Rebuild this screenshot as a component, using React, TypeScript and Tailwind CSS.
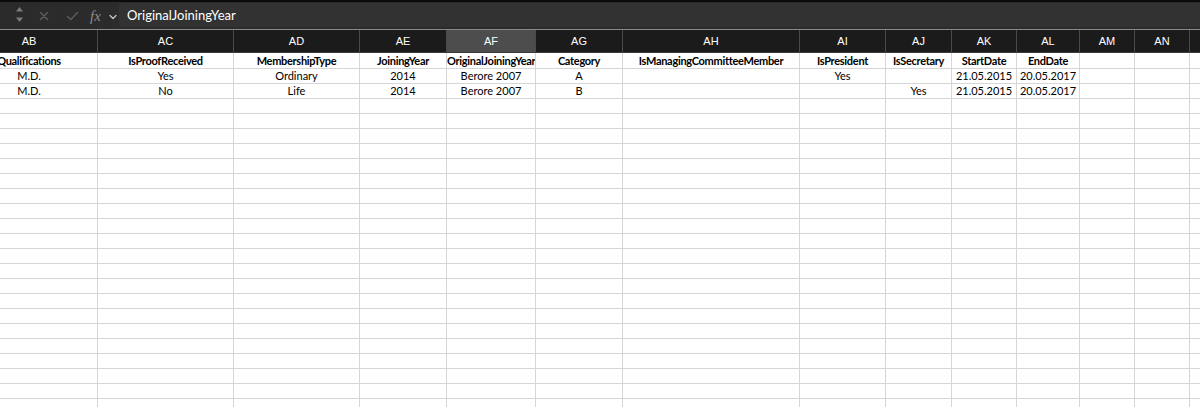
import React from 'react';

type Col = { key: string; w: string };

const columns: Col[] = [
  { key: 'AB', w: 'w-[137px]' },
  { key: 'AC', w: 'w-[136px]' },
  { key: 'AD', w: 'w-[126px]' },
  { key: 'AE', w: 'w-[87px]' },
  { key: 'AF', w: 'w-[89px]' },
  { key: 'AG', w: 'w-[87px]' },
  { key: 'AH', w: 'w-[177px]' },
  { key: 'AI', w: 'w-[86px]' },
  { key: 'AJ', w: 'w-[66px]' },
  { key: 'AK', w: 'w-[65px]' },
  { key: 'AL', w: 'w-[63px]' },
  { key: 'AM', w: 'w-[55px]' },
  { key: 'AN', w: 'w-[55px]' },
  { key: 'AO', w: 'w-[61px]' },
];

const rows: string[][] = [
  ['Qualifications', 'IsProofReceived', 'MembershipType', 'JoiningYear', 'OriginalJoiningYear', 'Category', 'IsManagingCommitteeMember', 'IsPresident', 'IsSecretary', 'StartDate', 'EndDate', '', '', ''],
  ['M.D.', 'Yes', 'Ordinary', '2014', 'Berore 2007', 'A', '', 'Yes', '', '21.05.2015', '20.05.2017', '', '', ''],
  ['M.D.', 'No', 'Life', '2014', 'Berore 2007', 'B', '', '', 'Yes', '21.05.2015', '20.05.2017', '', '', ''],
];

const TOTAL_ROWS = 25;

function Toolbar() {
  return (
    <div className="h-[29px] bg-[#2b2b2b] border-t-2 border-[#0b0b0b] flex items-stretch">
      {/* stepper + cancel/enter + fx */}
      <div className="w-[119px] shrink-0 relative">
        <svg className="absolute left-[15px] top-[4px]" width="9" height="18" viewBox="0 0 9 18">
          <path d="M4.5 1 L8 5.5 L1 5.5 Z" fill="#7a7a7a" />
          <path d="M4.5 16 L8 11.5 L1 11.5 Z" fill="#7a7a7a" />
        </svg>
        <svg className="absolute left-[39px] top-[9px]" width="10" height="10" viewBox="0 0 10 10">
          <path d="M1.5 1.5 L8.5 8.5 M8.5 1.5 L1.5 8.5" stroke="#5c5c5c" strokeWidth="1.5" strokeLinecap="round" />
        </svg>
        <svg className="absolute left-[66px] top-[9px]" width="13" height="10" viewBox="0 0 13 10">
          <path d="M1.5 5.5 L4.8 8.5 L11.5 1.5" stroke="#5c5c5c" strokeWidth="1.5" fill="none" strokeLinecap="round" strokeLinejoin="round" />
        </svg>
        <span className="absolute left-[90px] top-[4px] text-[15px] italic text-[#8c8c8c] font-['Liberation_Serif',serif] leading-[20px]">
          fx
        </span>
        <svg className="absolute left-[109px] top-[12px]" width="8" height="6" viewBox="0 0 8 6">
          <path d="M1 1.5 L4 4.5 L7 1.5" stroke="#c8c8c8" strokeWidth="1.2" fill="none" strokeLinecap="round" strokeLinejoin="round" />
        </svg>
      </div>
      <div className="flex-1 mt-[1px] mb-[2px] bg-[#323232] rounded-l-[4px] flex items-center pl-[8px] pt-[2px]">
        <span className="text-[13px] text-white font-['Lato',sans-serif]">OriginalJoiningYear</span>
      </div>
    </div>
  );
}

function HeaderRow() {
  return (
    <div className="flex h-[24px] bg-[#1b1b1b] border-t border-b border-t-[#8a8a8a] border-b-[#3a3a3a]">
      {columns.map((c) => (
        <div
          key={c.key}
          className={`${c.w} shrink-0 h-full border-r border-[#4a4a4a] flex items-center justify-center pt-[1px] text-[11px] text-white font-['Liberation_Sans',sans-serif] ${
            c.key === 'AF' ? 'bg-[#4d4d4d]' : ''
          }`}
        >
          {c.key}
        </div>
      ))}
    </div>
  );
}

function DataRow({ cells, index }: { cells: string[]; index: number }) {
  const bold = index === 0;
  return (
    <div className={`flex ${index === 0 ? 'h-[16px]' : 'h-[15px]'} border-b border-[#d6d6d6]`}>
      {columns.map((c, i) => {
        const text = cells[i] || '';
        const overflowLeft = text === 'OriginalJoiningYear';
        return (
          <div
            key={c.key}
            className={`${c.w} shrink-0 h-full border-r border-[#d6d6d6] flex items-center overflow-hidden whitespace-nowrap text-[11px] leading-[14px] text-black font-['Lato',sans-serif] ${
              bold ? 'font-bold tracking-[-0.3px]' : ''
            } ${overflowLeft ? 'justify-start' : 'justify-center'}`}
          >
            {text}
          </div>
        );
      })}
    </div>
  );
}

export default function App() {
  const allRows: string[][] = [];
  for (let i = 0; i < TOTAL_ROWS; i++) {
    allRows.push(rows[i] || []);
  }

  return (
    <div className="w-[1200px] h-[407px] overflow-hidden bg-white">
      <Toolbar />
      <div className="-ml-[39px] w-[1300px]">
        <HeaderRow />
        {allRows.map((r, i) => (
          <DataRow key={i} cells={r} index={i} />
        ))}
      </div>
    </div>
  );
}
